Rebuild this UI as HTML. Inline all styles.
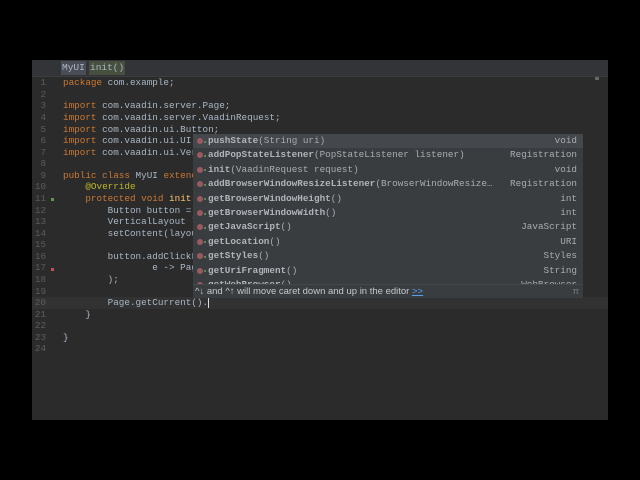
<!DOCTYPE html>
<html><head><style>
body{margin:0;width:640px;height:480px;background:#000;overflow:hidden;position:relative;font-family:"Liberation Mono",monospace;}
#ed{position:absolute;left:32px;top:60px;width:576px;height:360px;background:#2b2b2b;}
#bc{position:absolute;left:0;top:0;width:576px;height:16px;background:#323437;border-bottom:1px solid #3b3d3e;}
.crumb{position:absolute;top:1px;height:14px;font-size:9.5px;line-height:14px;padding:0 1px;color:#a9b7c6;}
.ln{position:absolute;left:0;width:14px;text-align:right;font-size:9.25px;color:#5b5d60;}
.cl{position:absolute;left:31px;font-size:9.3px;color:#a9b7c6;white-space:pre;}
.k{color:#cc7832}.a{color:#bbb529}.m{color:#ffc66d}
#pop{position:absolute;left:193px;top:134px;width:390px;height:164px;background:#3a3d40;font-size:9.3px;color:#a8adb3;overflow:hidden;}
.r{position:absolute;left:0;width:390px;height:14.4px;line-height:14.4px;white-space:pre;}
.r b{font-weight:bold;color:#b0b5bb}
.r .t{position:absolute;right:6px;top:0;}
.r .n{position:absolute;left:15px;}
.ic{position:absolute;left:4px;top:4px;width:6px;height:6px;border-radius:50%;background:#9a5a62;}
.ic:after{content:"";position:absolute;left:7px;top:2.5px;width:2px;height:2px;background:#5a8a5a;}
#hint{position:absolute;left:0;top:150px;width:390px;height:14px;background:#3a3d40;border-top:1px solid #45484b;font-family:"Liberation Sans",sans-serif;font-size:9.5px;color:#c4c8cc;line-height:13px;padding-left:2px;}
</style></head><body>
<div id="ed">
<div id="bc"><span class="crumb" style="left:29px;background:#4a4d55">MyUI</span><span class="crumb" style="left:57px;background:#47503f">init()</span></div>
<div style="position:absolute;left:0;top:237px;width:576px;height:12px;background:#323232"></div>
<div style="position:absolute;left:563px;top:17px;width:4px;height:3px;background:#666"></div>
<div id="lines"></div>
<div style="position:absolute;left:19px;top:138px;width:3px;height:3px;background:#5b9a4b"></div>
<div style="position:absolute;left:19px;top:208px;width:3px;height:3px;background:#c25050"></div>
</div>
<div id="pop">
<div class="r" style="top:0;background:#44484d"><span class="ic"></span><span class="n"><b>pushState</b>(String uri)</span><span class="t">void</span></div>
<div class="r" style="top:14.4px"><span class="ic"></span><span class="n"><b>addPopStateListener</b>(PopStateListener listener)</span><span class="t">Registration</span></div>
<div class="r" style="top:28.8px"><span class="ic"></span><span class="n"><b>init</b>(VaadinRequest request)</span><span class="t">void</span></div>
<div class="r" style="top:43.2px"><span class="ic"></span><span class="n"><b>addBrowserWindowResizeListener</b>(BrowserWindowResize…</span><span class="t">Registration</span></div>
<div class="r" style="top:57.6px"><span class="ic"></span><span class="n"><b>getBrowserWindowHeight</b>()</span><span class="t">int</span></div>
<div class="r" style="top:72px"><span class="ic"></span><span class="n"><b>getBrowserWindowWidth</b>()</span><span class="t">int</span></div>
<div class="r" style="top:86.4px"><span class="ic"></span><span class="n"><b>getJavaScript</b>()</span><span class="t">JavaScript</span></div>
<div class="r" style="top:100.8px"><span class="ic"></span><span class="n"><b>getLocation</b>()</span><span class="t">URI</span></div>
<div class="r" style="top:115.2px"><span class="ic"></span><span class="n"><b>getStyles</b>()</span><span class="t">Styles</span></div>
<div class="r" style="top:129.6px"><span class="ic"></span><span class="n"><b>getUriFragment</b>()</span><span class="t">String</span></div>
<div class="r" style="top:144px"><span class="ic"></span><span class="n"><b>getWebBrowser</b>()</span><span class="t">WebBrowser</span></div>
<div id="hint">^↓ and ^↑ will move caret down and up in the editor <span style="color:#589df6;text-decoration:underline">&gt;&gt;</span><span style="position:absolute;right:6px;color:#777">π</span></div>
</div>
<script>
var code=[
'<span class="k">package</span> com.example;','',
'<span class="k">import</span> com.vaadin.server.Page;',
'<span class="k">import</span> com.vaadin.server.VaadinRequest;',
'<span class="k">import</span> com.vaadin.ui.Button;',
'<span class="k">import</span> com.vaadin.ui.UI;',
'<span class="k">import</span> com.vaadin.ui.VerticalLayout;','',
'<span class="k">public class</span> MyUI <span class="k">extends</span> UI {',
'    <span class="a">@Override</span>',
'    <span class="k">protected void</span> <span class="m">init</span>(VaadinRequest request) {',
'        Button button = <span class="k">new</span> Button();',
'        VerticalLayout layout = <span class="k">new</span> VerticalLayout();',
'        setContent(layout);','',
'        button.addClickListener(',
'                e -> Page.getCurrent()',
'        );','',
'        Page.getCurrent().<span style="border-left:1px solid #ddd"></span>',
'    }','','}',''];
var h='';
for(var i=0;i<24;i++){var t=17.3+i*11.57;
h+='<div class="ln" style="top:'+t+'px">'+(i+1)+'</div><div class="cl" style="top:'+t+'px">'+code[i]+'</div>';}
document.getElementById('lines').innerHTML=h;
</script>
</body></html>
